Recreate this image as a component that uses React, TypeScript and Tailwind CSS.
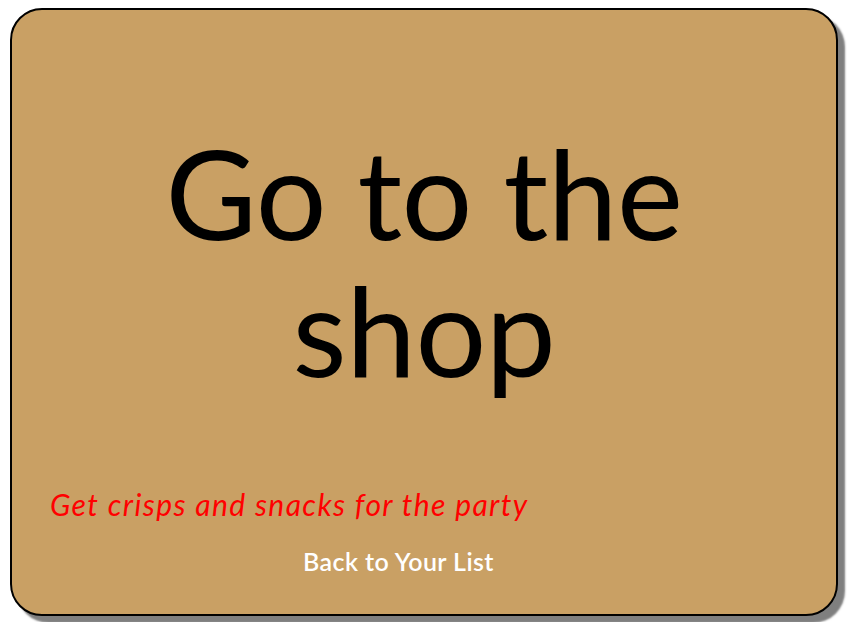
import React from 'react';

export default function App() {
  return (
    <div className="min-h-[622px] w-[847px] bg-white pl-[10px] pt-[8px]" style={{ fontFamily: 'Lato, "Open Sans", sans-serif' }}>
      <div className="w-[828px] h-[608px] bg-[#c9a064] border-2 border-black rounded-[32px] shadow-[7px_7px_2px_#7f7f7f] flex flex-col">
        <h1 className="mt-[114px] text-center text-[125px] leading-[137px] font-normal text-black px-10 tracking-[-0.5px]">
          Go to the shop
        </h1>
        <p className="mt-auto pl-[38px] text-[30px] italic text-[#ff0000] tracking-[1.4px]">
          Get crisps and snacks for the party
        </p>
        <a href="#" className="mt-[16px] mb-[34px] ml-[291px] text-[25px] font-semibold text-white tracking-[0.4px]">
          Back to Your List
        </a>
      </div>
    </div>
  );
}
